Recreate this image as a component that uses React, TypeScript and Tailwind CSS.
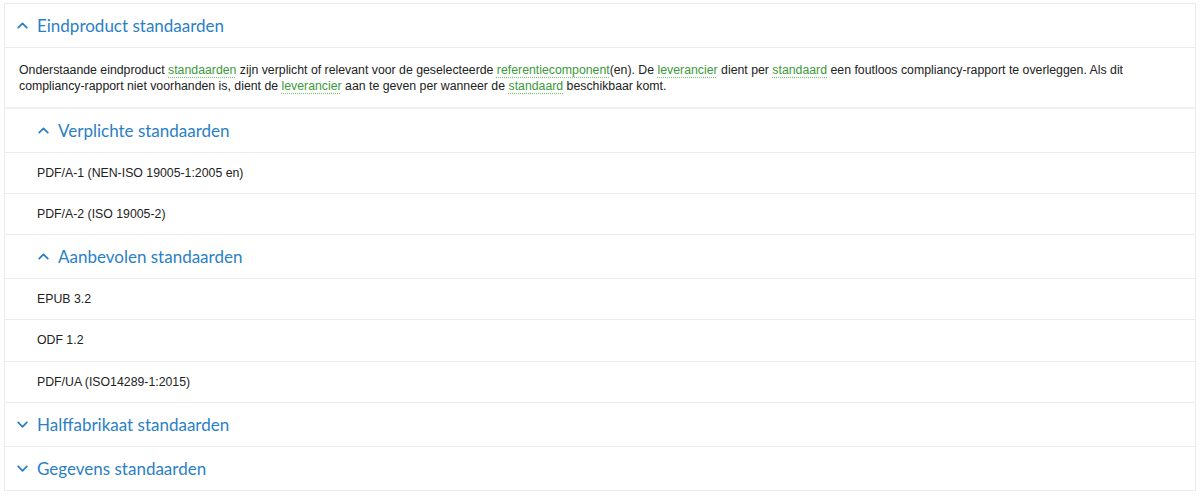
import React from 'react';

const Chevron = ({ up }: { up?: boolean }) => (
  <svg width="11" height="11" viewBox="0 0 12 12" className="shrink-0">
    <path
      d={up ? 'M1.3 8.3 L6 3.6 L10.7 8.3' : 'M1.3 3.8 L6 8.5 L10.7 3.8'}
      fill="none"
      stroke="currentColor"
      strokeWidth="1.9"
      strokeLinecap="round"
      strokeLinejoin="round"
    />
  </svg>
);

const Term = ({ children }: { children: React.ReactNode }) => (
  <span className="text-[#3b9a3b] underline decoration-dotted decoration-[#7cc47c] underline-offset-[3px]">{children}</span>
);

const Header = ({ title, up, indent }: { title: string; up?: boolean; indent?: boolean }) => (
  <div className={`flex h-[44px] items-center gap-[9px] border-b border-[#e9ecef] text-[#2b7fc6] text-[17px] font-['Lato',sans-serif] ${indent ? 'pl-[33px]' : 'pl-[12px]'}`}>
    <Chevron up={up} />
    <span>{title}</span>
  </div>
);

const Item = ({ label, tall }: { label: string; tall?: boolean }) => (
  <div className={`flex items-center border-b border-[#e9ecef] pl-[32px] text-[12.3px] text-[#222] ${tall ? 'h-[42px]' : 'h-[41px]'}`}>{label}</div>
);

const App = () => {
  return (
    <div className="w-[1200px] h-[496px] bg-white pt-[3px] pl-[4px] pr-[4px] font-['Liberation_Sans',Arial,sans-serif]">
      <div className="border-t border-l border-r border-[#e9ecef]">
        <Header title="Eindproduct standaarden" up />
        <div className="border-b-2 border-[#eef0f2] px-[14px] pt-[14px] pb-[13px] text-[12.3px] leading-[16px] text-[#222]">
          Onderstaande eindproduct <Term>standaarden</Term> zijn verplicht of relevant voor de geselecteerde{' '}
          <Term>referentiecomponent</Term>(en). De <Term>leverancier</Term> dient per <Term>standaard</Term> een foutloos
          compliancy-rapport te overleggen. Als dit<br />compliancy-rapport niet voorhanden is, dient de{' '}
          <Term>leverancier</Term> aan te geven per wanneer de <Term>standaard</Term> beschikbaar komt.
        </div>
        <Header title="Verplichte standaarden" up indent />
        <Item label="PDF/A-1 (NEN-ISO 19005-1:2005 en)" />
        <Item label="PDF/A-2 (ISO 19005-2)" />
        <Header title="Aanbevolen standaarden" up indent />
        <Item label="EPUB 3.2" />
        <Item label="ODF 1.2" tall />
        <Item label="PDF/UA (ISO14289-1:2015)" />
        <Header title="Halffabrikaat standaarden" />
        <Header title="Gegevens standaarden" />
      </div>
    </div>
  );
};

export default App;
